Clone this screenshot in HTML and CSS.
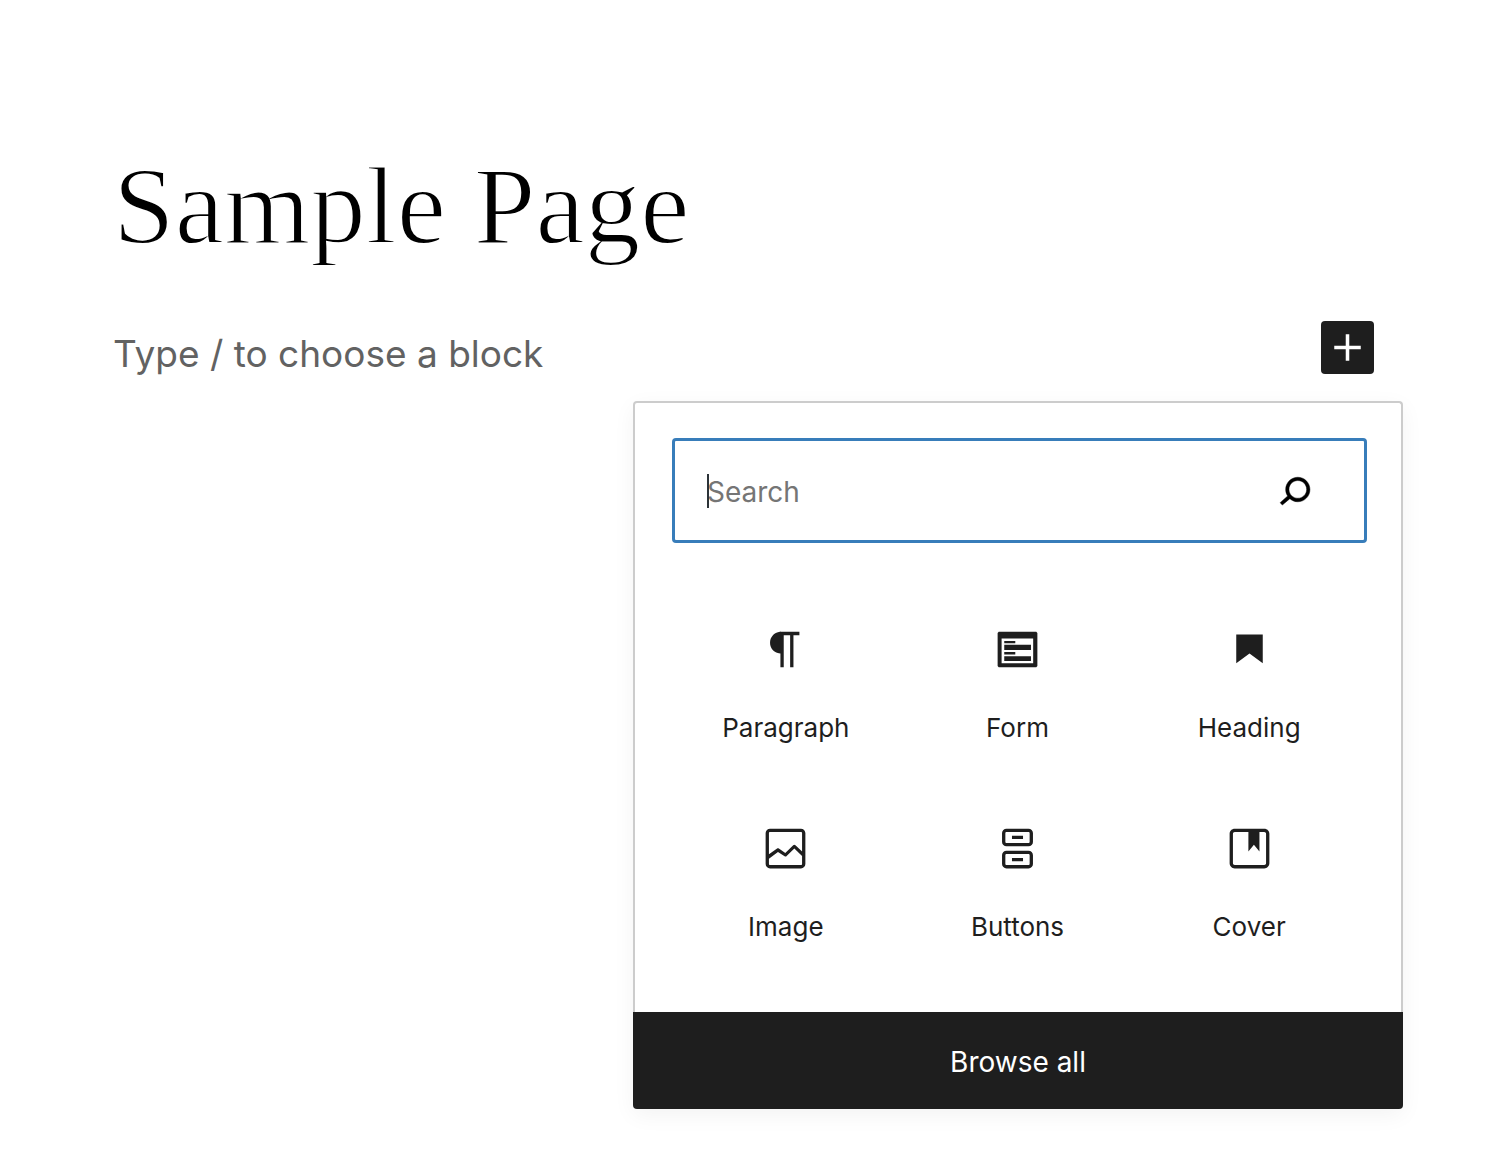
FILE: index.html
```html
<!DOCTYPE html>
<html lang="en">
<head>
<meta charset="utf-8">
<meta name="viewport" content="width=device-width, initial-scale=1">
<title>Sample Page</title>
<link rel="stylesheet" href="styles.css">
</head>
<body>
<main class="editor">
  <h1 class="title">Sample Page</h1>
  <div class="prompt">
    <input class="prompt-input" type="text" aria-label="Empty block" placeholder="Type / to choose a block">
    <button class="add" type="button" aria-label="Add block">
      <svg class="icon" viewBox="0 0 24 24"><path d="M18 11.2h-5.2V6h-1.6v5.2H6v1.6h5.2V18h1.6v-5.2H18z"/></svg>
    </button>
  </div>
  <section class="inserter" aria-label="Block inserter">
    <div class="inserter-body">
      <div class="search">
        <span class="search-field">
          <input class="search-input" type="text" aria-label="Search" placeholder="Search">
          <span class="caret"></span>
        </span>
        <svg class="icon" viewBox="0 0 24 24"><path stroke="currentColor" stroke-width=".2" d="M13.5 6C10.500 6 8 8.500 8 11.500c0 1.100.3 2.100.9 3l-3.400 3 1 1.100 3.400-2.900c1 .9 2.200 1.400 3.600 1.400 3 0 5.500-2.500 5.500-5.500C19 8.500 16.500 6 13.500 6zm0 9.500c-2.200 0-4-1.800-4-4s1.800-4 4-4 4 1.800 4 4-1.800 4-4 4z"/></svg>
      </div>
      <div class="blocks">
        <button class="block" type="button">
          <svg class="icon" viewBox="0 0 24 24"><path d="M18.300 4H9.900v-.1l-.9.2c-2.300.4-4 2.400-4 4.800s1.700 4.400 4 4.800l.7.1V20h1.500V5.500h2.900V20h1.500V5.500h2.700V4z"/></svg>
          <span>Paragraph</span>
        </button>
        <button class="block" type="button">
          <svg class="icon" viewBox="0 0 24 24"><path fill-rule="evenodd" d="M3.500 4h17l.5.5v15l-.5.5h-17l-.5-.5v-15zM4.800 7v11.200h14.300V7zM6 8.100h5v1.100H6zM6 9.900h12.100v2.300H6zM6 13.100h5v1.200H6zM6 15.100h12.100v2.100H6z"/></svg>
          <span>Form</span>
        </button>
        <button class="block" type="button">
          <svg class="icon" viewBox="0 0 24 24"><path d="M6 5.200v13l6-4.400 6 4.400v-13z"/></svg>
          <span>Heading</span>
        </button>
        <button class="block" type="button">
          <svg class="icon" viewBox="0 0 24 24"><path d="M19 3H5c-1.100 0-2 .9-2 2v14c0 1.100.9 2 2 2h14c1.100 0 2-.9 2-2V5c0-1.100-.9-2-2-2zM5 4.500h14c.3 0 .5.2.5.5v8.400l-3-2.900c-.3-.3-.8-.3-1 0L11.900 14 9 12c-.3-.2-.6-.2-.8 0l-3.700 2.600V5c0-.3.2-.5.5-.5zm14 15H5c-.3 0-.5-.2-.5-.5v-2.400l4.100-3 3 1.900c.3.2.7.2.9-.1L16 12l3.500 3.400V19c0 .3-.2.5-.5.5z"/></svg>
          <span>Image</span>
        </button>
        <button class="block" type="button">
          <svg class="icon" viewBox="0 0 24 24"><path fill-rule="evenodd" d="M7 3h10a2 2 0 0 1 2 2v4a2 2 0 0 1-2 2H7a2 2 0 0 1-2-2V5a2 2 0 0 1 2-2zm0 1.500a.5.5 0 0 0-.5.5v4a.5.5 0 0 0 .5.5h10a.5.5 0 0 0 .5-.5V5a.5.5 0 0 0-.5-.5zM9.500 6.250h5v1.500h-5zM7 13h10a2 2 0 0 1 2 2v4a2 2 0 0 1-2 2H7a2 2 0 0 1-2-2v-4a2 2 0 0 1 2-2zm0 1.500a.5.5 0 0 0-.5.5v4a.5.5 0 0 0 .5.5h10a.5.5 0 0 0 .5-.5v-4a.5.5 0 0 0-.5-.5zM9.500 16.250h5v1.500h-5z"/></svg>
          <span>Buttons</span>
        </button>
        <button class="block" type="button">
          <svg class="icon" viewBox="0 0 24 24"><path d="M18.700 3H5.300C4 3 3 4 3 5.300v13.400C3 20 4 21 5.300 21h13.400c1.300 0 2.300-1 2.300-2.300V5.300C21 4 20 3 18.700 3zm.8 15.700c0 .4-.4.8-.8.8H5.300c-.4 0-.8-.4-.8-.8V5.300c0-.4.4-.8.8-.8h6.200v8.900l2.500-3.100 2.500 3.100V4.500h2.200c.4 0 .8.4.8.8v13.400z"/></svg>
          <span>Cover</span>
        </button>
      </div>
    </div>
    <button class="browse" type="button">Browse all</button>
  </section>
</main>
</body>
</html>
```
FILE: styles.css
```css
* {
  box-sizing: border-box;
}

body {
  margin: 0;
  background: #fff;
  color: #1e1e1e;
  font-family: Inter, "Liberation Sans", sans-serif;
}

button,
input {
  margin: 0;
  padding: 0;
  border: 0;
  background: none;
  color: inherit;
  font: inherit;
}

input {
  min-width: 0;
  outline: 0;
}

button {
  cursor: pointer;
}

.editor {
  padding: 136px 87px 53px 113px;
}

/* The background-coloured stroke trims the glyphs to a lighter weight. */
.title {
  margin: 0;
  color: #000;
  font: 400 111px/140px "Liberation Serif", serif;
  -webkit-text-stroke: 2px #fff;
}

.prompt {
  display: flex;
  align-items: flex-start;
  gap: 24px;
  margin-top: 45px;
  padding-right: 29px;
}

.prompt-input {
  flex: 1;
  height: 64px;
  font-size: 37px;
}

.prompt-input::placeholder {
  color: #626262;
  opacity: 1;
}

.icon {
  display: block;
  flex: none;
  width: 53px;
  height: 53px;
  fill: currentColor;
}

.add {
  flex: none;
  border-radius: 4px;
  background: #1e1e1e;
  color: #fff;
}

.inserter {
  max-width: 770px;
  margin: 16px 0 0 auto;
  border-radius: 4px;
  box-shadow: 0 6px 22px rgba(0, 0, 0, 0.05);
}

.inserter-body {
  padding: 35px 34px 35px 35px;
  border: 2px solid #ccc;
  border-bottom: 0;
  border-radius: 4px 4px 0 0;
  background: #fff;
}

.search {
  display: flex;
  align-items: center;
  height: 105px;
  margin-left: 2px;
  padding: 0 43px 0 32px;
  border: 3px solid #387dba;
  border-radius: 4px;
  color: #000;
}

.search-field {
  position: relative;
  display: flex;
  flex: 1;
}

.search-input {
  flex: 1;
  height: 40px;
  padding-top: 2px;
  font-size: 28px;
}

.search-input::placeholder {
  color: #757575;
  opacity: 1;
}

.caret {
  position: absolute;
  top: 3px;
  left: 0;
  width: 2px;
  height: 34px;
  background: #2c3338;
}

.blocks {
  display: grid;
  grid-template-columns: repeat(3, 1fr);
  margin: 36px 2px 0 0;
}

.block {
  display: flex;
  flex-direction: column;
  align-items: center;
  gap: 36px;
  height: 199px;
  padding-top: 44px;
  font-size: 26px;
  line-height: 32px;
}

.browse {
  display: block;
  width: 100%;
  height: 97px;
  padding-top: 2px;
  border-radius: 0 0 4px 4px;
  background: #1e1e1e;
  color: #fff;
  font-size: 28px;
}
```
